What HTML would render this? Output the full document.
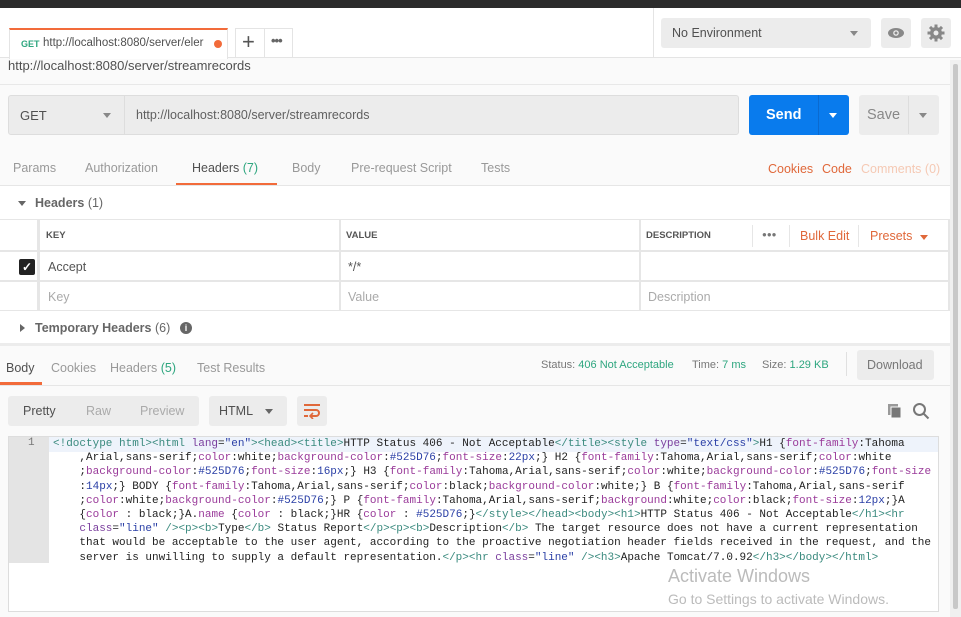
<!DOCTYPE html>
<html><head><style>
*{box-sizing:border-box;margin:0;padding:0}
body{width:961px;height:617px;overflow:hidden;background:#fafafa;font-family:"Liberation Sans",sans-serif;font-size:13px;color:#505050;position:relative}
.a{position:absolute}
.code div{height:14.2px;white-space:pre}
.t{color:#3a8a7e}.at{color:#7a3e9d}.s{color:#2a3fa6}.p{color:#9a3b9a}.v{color:#2a3fa6}
</style></head><body>
<div class="a" style="left:0;top:0;width:961px;height:8px;background:#2b2b2b"></div>
<div class="a" style="left:0;top:8px;width:961px;height:50px;background:#fff;border-bottom:1px solid #e4e4e4"></div>
<div class="a" style="left:653px;top:8px;width:1px;height:50px;background:#e4e4e4"></div>
<div class="a" style="left:9px;top:28px;width:219px;height:31px;background:#fff;border:1px solid #e4e4e4;border-top:2px solid #f26b3a;border-bottom:none"></div>
<div class="a" style="left:21px;top:39px;font-size:9px;font-weight:bold;color:#2ea67f">GET</div>
<div class="a" style="left:43px;top:37px;font-size:11.5px;color:#505050;width:166px;overflow:hidden;white-space:nowrap">http://localhost:8080/server/eler</div>
<div class="a" style="left:214px;top:40px;width:8px;height:8px;border-radius:50%;background:#f26b3a"></div>
<div class="a" style="left:235px;top:28px;width:58px;height:30px;background:#fff;border:1px solid #e4e4e4"></div>
<div class="a" style="left:264px;top:28px;width:1px;height:30px;background:#e4e4e4"></div>
<div class="a" style="left:242px;top:29px;font-size:22px;color:#555">+</div>
<div class="a" style="left:271px;top:33px;font-size:13px;color:#666;letter-spacing:-1px;font-weight:bold">•••</div>
<div class="a" style="left:661px;top:18px;width:210px;height:30px;background:#ececec;border-radius:3px"></div>
<div class="a" style="left:672px;top:26px;font-size:12.5px;color:#505050">No Environment</div>
<div class="a" style="left:850px;top:31px;width:0;height:0;border-left:4px solid transparent;border-right:4px solid transparent;border-top:5px solid #888"></div>
<div class="a" style="left:881px;top:18px;width:30px;height:30px;background:#ececec;border-radius:3px"></div>
<svg class="a" style="left:887px;top:27px" width="18" height="12"><ellipse cx="9" cy="6" rx="8" ry="5" fill="#888"/><circle cx="9" cy="6" r="2.8" fill="#ececec"/><circle cx="9" cy="6" r="1.5" fill="#888"/></svg>
<div class="a" style="left:921px;top:18px;width:30px;height:30px;background:#ececec;border-radius:3px"></div>
<svg class="a" style="left:927px;top:24px" width="18" height="18" viewBox="0 0 18 18"><g fill="#888"><circle cx="9" cy="9" r="6"/><rect x="7.5" y="0.5" width="3" height="17"/><rect x="0.5" y="7.5" width="17" height="3"/><rect x="7.5" y="0.5" width="3" height="17" transform="rotate(45 9 9)"/><rect x="7.5" y="0.5" width="3" height="17" transform="rotate(-45 9 9)"/></g><circle cx="9" cy="9" r="2.5" fill="#ececec"/></svg>
<div class="a" style="left:8px;top:58px;font-size:13px;color:#505050">http://localhost:8080/server/streamrecords</div>
<div class="a" style="left:0;top:84px;width:950px;height:1px;background:#e8e8e8"></div>
<div class="a" style="left:8px;top:95px;width:731px;height:40px;background:#ececec;border:1px solid #ddd;border-radius:3px"></div>
<div class="a" style="left:124px;top:96px;width:1px;height:38px;background:#ddd"></div>
<div class="a" style="left:20px;top:108px;font-size:13px;color:#505050">GET</div>
<div class="a" style="left:103px;top:113px;border-left:4px solid transparent;border-right:4px solid transparent;border-top:5px solid #888"></div>
<div class="a" style="left:136px;top:108px;font-size:12.5px;color:#606060">http://localhost:8080/server/streamrecords</div>
<div class="a" style="left:749px;top:95px;width:100px;height:40px;background:#097bed;border-radius:3px"></div>
<div class="a" style="left:818px;top:95px;width:1px;height:40px;background:#0a6ad0"></div>
<div class="a" style="left:766px;top:107px;font-size:14.5px;font-weight:bold;color:#fff">Send</div>
<div class="a" style="left:829px;top:113px;border-left:4px solid transparent;border-right:4px solid transparent;border-top:5px solid #fff"></div>
<div class="a" style="left:859px;top:95px;width:80px;height:40px;background:#ececec;border-radius:3px"></div>
<div class="a" style="left:908px;top:96px;width:1px;height:38px;background:#ddd"></div>
<div class="a" style="left:867px;top:107px;font-size:14.5px;color:#888">Save</div>
<div class="a" style="left:919px;top:113px;border-left:4px solid transparent;border-right:4px solid transparent;border-top:5px solid #888"></div>
<div class="a" style="left:13px;top:161px;font-size:12.5px;color:#999">Params</div>
<div class="a" style="left:85px;top:161px;font-size:12.5px;color:#999">Authorization</div>
<div class="a" style="left:192px;top:161px;font-size:12.5px;color:#505050">Headers <span style="color:#2ea67f">(7)</span></div>
<div class="a" style="left:176px;top:183px;width:101px;height:3px;background:#f26b3a"></div>
<div class="a" style="left:292px;top:161px;font-size:12.5px;color:#999">Body</div>
<div class="a" style="left:351px;top:161px;font-size:12.5px;color:#999">Pre-request Script</div>
<div class="a" style="left:481px;top:161px;font-size:12.5px;color:#999">Tests</div>
<div class="a" style="left:768px;top:162px;font-size:12.5px;color:#e0683a">Cookies</div>
<div class="a" style="left:822px;top:162px;font-size:12.5px;color:#e0683a">Code</div>
<div class="a" style="left:861px;top:162px;font-size:12.5px;color:#f5c9b4">Comments (0)</div>
<div class="a" style="left:0;top:185px;width:950px;height:1px;background:#e6e6e6"></div>
<div class="a" style="left:0;top:186px;width:950px;height:158px;background:#fff"></div>
<div class="a" style="left:18px;top:201px;border-left:4px solid transparent;border-right:4px solid transparent;border-top:5px solid #666"></div>
<div class="a" style="left:35px;top:196px;font-size:12.5px;font-weight:bold;color:#666">Headers <span style="font-weight:normal">(1)</span></div>
<div class="a" style="left:0;top:219px;width:950px;height:1px;background:#e6e6e6"></div>
<div class="a" style="left:37px;top:219px;width:3px;height:92px;background:#e6e6e6"></div>
<div class="a" style="left:339px;top:219px;width:2px;height:92px;background:#e6e6e6"></div>
<div class="a" style="left:639px;top:219px;width:2px;height:92px;background:#e6e6e6"></div>
<div class="a" style="left:948px;top:219px;width:2px;height:92px;background:#e6e6e6"></div>
<div class="a" style="left:0;top:250px;width:950px;height:2px;background:#e6e6e6"></div>
<div class="a" style="left:0;top:280px;width:950px;height:2px;background:#e6e6e6"></div>
<div class="a" style="left:0;top:310px;width:950px;height:1px;background:#e6e6e6"></div>
<div class="a" style="left:46px;top:230px;font-size:9.5px;font-weight:bold;color:#555">KEY</div>
<div class="a" style="left:346px;top:230px;font-size:9.5px;font-weight:bold;color:#555">VALUE</div>
<div class="a" style="left:646px;top:230px;font-size:9.5px;font-weight:bold;color:#555">DESCRIPTION</div>
<div class="a" style="left:752px;top:225px;width:1px;height:22px;background:#e6e6e6"></div>
<div class="a" style="left:789px;top:225px;width:1px;height:22px;background:#e6e6e6"></div>
<div class="a" style="left:858px;top:225px;width:1px;height:22px;background:#e6e6e6"></div>
<div class="a" style="left:762px;top:230px;font-size:8px;color:#777;letter-spacing:0px">●●●</div>
<div class="a" style="left:800px;top:229px;font-size:12.5px;color:#e0683a">Bulk Edit</div>
<div class="a" style="left:870px;top:229px;font-size:12.5px;color:#e0683a">Presets</div>
<div class="a" style="left:920px;top:235px;border-left:4px solid transparent;border-right:4px solid transparent;border-top:5px solid #e0683a"></div>
<div class="a" style="left:19px;top:259px;width:16px;height:16px;background:#222;border-radius:2px;color:#fff;font-size:12px;font-weight:bold;text-align:center;line-height:16px">✓</div>
<div class="a" style="left:48px;top:260px;font-size:12.5px;color:#555">Accept</div>
<div class="a" style="left:348px;top:260px;font-size:12.5px;color:#555">*/*</div>
<div class="a" style="left:48px;top:290px;font-size:12.5px;color:#aaa">Key</div>
<div class="a" style="left:348px;top:290px;font-size:12.5px;color:#aaa">Value</div>
<div class="a" style="left:648px;top:290px;font-size:12.5px;color:#aaa">Description</div>
<div class="a" style="left:20px;top:324px;border-top:4px solid transparent;border-bottom:4px solid transparent;border-left:5px solid #666"></div>
<div class="a" style="left:35px;top:321px;font-size:12.5px;font-weight:bold;color:#666">Temporary Headers <span style="font-weight:normal">(6)</span></div>
<div class="a" style="left:180px;top:322px;width:12px;height:12px;border-radius:50%;background:#666;color:#fff;font-size:9px;font-weight:bold;text-align:center;line-height:12px">i</div>
<div class="a" style="left:0;top:343px;width:950px;height:3px;background:#ececec"></div>
<div class="a" style="left:6px;top:361px;font-size:12.5px;color:#505050">Body</div>
<div class="a" style="left:0;top:382px;width:42px;height:3px;background:#f26b3a"></div>
<div class="a" style="left:51px;top:361px;font-size:12.5px;color:#999">Cookies</div>
<div class="a" style="left:110px;top:361px;font-size:12.5px;color:#999">Headers <span style="color:#2ea67f">(5)</span></div>
<div class="a" style="left:197px;top:361px;font-size:12.5px;color:#999">Test Results</div>
<div class="a" style="left:541px;top:359px;font-size:11px;color:#777">Status: <span style="color:#2ea67f">406 Not Acceptable</span></div>
<div class="a" style="left:692px;top:359px;font-size:11px;color:#777">Time: <span style="color:#2ea67f">7 ms</span></div>
<div class="a" style="left:762px;top:359px;font-size:11px;color:#777">Size: <span style="color:#2ea67f">1.29 KB</span></div>
<div class="a" style="left:846px;top:352px;width:1px;height:24px;background:#e0e0e0"></div>
<div class="a" style="left:857px;top:350px;width:77px;height:30px;background:#ececec;border-radius:3px"></div>
<div class="a" style="left:867px;top:358px;font-size:12.5px;color:#777">Download</div>
<div class="a" style="left:0;top:385px;width:950px;height:1px;background:#e6e6e6"></div>
<div class="a" style="left:8px;top:396px;width:191px;height:30px;background:#ececec;border-radius:3px"></div>
<div class="a" style="left:23px;top:404px;font-size:12.5px;color:#505050">Pretty</div>
<div class="a" style="left:86px;top:404px;font-size:12.5px;color:#aaa">Raw</div>
<div class="a" style="left:140px;top:404px;font-size:12.5px;color:#aaa">Preview</div>
<div class="a" style="left:209px;top:396px;width:78px;height:30px;background:#ececec;border-radius:3px"></div>
<div class="a" style="left:219px;top:404px;font-size:12.5px;color:#505050">HTML</div>
<div class="a" style="left:265px;top:409px;border-left:4px solid transparent;border-right:4px solid transparent;border-top:5px solid #666"></div>
<div class="a" style="left:297px;top:396px;width:30px;height:30px;background:#ececec;border-radius:3px"></div>
<svg class="a" style="left:303px;top:403px" width="18" height="16"><path d="M1 2h16M1 7h12a3 3 0 0 1 0 6H8M1 13h4" stroke="#e0683a" stroke-width="2" fill="none"/><path d="M10 10l-3 3 3 3" stroke="#e0683a" stroke-width="1.6" fill="none"/></svg>
<svg class="a" style="left:887px;top:403px" width="16" height="16"><rect x="1" y="1" width="10" height="11" fill="#999"/><rect x="4" y="4" width="10" height="11" fill="#777" stroke="#fafafa"/></svg>
<svg class="a" style="left:912px;top:402px" width="18" height="18"><circle cx="7.5" cy="7.5" r="5.5" stroke="#777" stroke-width="2" fill="none"/><path d="M11.5 11.5l5 5" stroke="#777" stroke-width="2"/></svg>
<div class="a" style="left:8px;top:436px;width:931px;height:176px;background:#fff;border:1px solid #ddd"></div>
<div class="a" style="left:9px;top:437px;width:40px;height:126px;background:#e4e4e4"></div>
<div class="a" style="left:49px;top:437px;width:889px;height:15px;background:#eef3fb"></div>
<div class="a" style="left:28px;top:437px;font-family:'Liberation Mono',monospace;font-size:11px;color:#777">1</div>
<div class="a code" style="left:53px;top:437px;font-family:'Liberation Mono',monospace;font-size:11px;color:#222;line-height:14.2px">
<div><span class="t">&lt;!doctype html&gt;&lt;html </span><span class="at">lang</span>=<span class="s">"en"</span><span class="t">&gt;&lt;head&gt;&lt;title&gt;</span>HTTP Status 406 - Not Acceptable<span class="t">&lt;/title&gt;&lt;style </span><span class="at">type</span>=<span class="s">"text/css"</span><span class="t">&gt;</span>H1 {<span class="p">font-family</span>:Tahoma</div>
<div>    ,Arial,sans-serif;<span class="p">color</span>:white;<span class="p">background-color</span>:<span class="v">#525D76</span>;<span class="p">font-size</span>:<span class="v">22px</span>;} H2 {<span class="p">font-family</span>:Tahoma,Arial,sans-serif;<span class="p">color</span>:white</div>
<div>    ;<span class="p">background-color</span>:<span class="v">#525D76</span>;<span class="p">font-size</span>:<span class="v">16px</span>;} H3 {<span class="p">font-family</span>:Tahoma,Arial,sans-serif;<span class="p">color</span>:white;<span class="p">background-color</span>:<span class="v">#525D76</span>;<span class="p">font-size</span></div>
<div>    :<span class="v">14px</span>;} BODY {<span class="p">font-family</span>:Tahoma,Arial,sans-serif;<span class="p">color</span>:black;<span class="p">background-color</span>:white;} B {<span class="p">font-family</span>:Tahoma,Arial,sans-serif</div>
<div>    ;<span class="p">color</span>:white;<span class="p">background-color</span>:<span class="v">#525D76</span>;} P {<span class="p">font-family</span>:Tahoma,Arial,sans-serif;<span class="p">background</span>:white;<span class="p">color</span>:black;<span class="p">font-size</span>:<span class="v">12px</span>;}A</div>
<div>    {<span class="p">color</span> : black;}A.<span class="p">name</span> {<span class="p">color</span> : black;}HR {<span class="p">color</span> : <span class="v">#525D76</span>;}<span class="t">&lt;/style&gt;&lt;/head&gt;&lt;body&gt;&lt;h1&gt;</span>HTTP Status 406 - Not Acceptable<span class="t">&lt;/h1&gt;&lt;hr</span></div>
<div>    <span class="at">class</span>=<span class="s">"line"</span> <span class="t">/&gt;&lt;p&gt;&lt;b&gt;</span>Type<span class="t">&lt;/b&gt;</span> Status Report<span class="t">&lt;/p&gt;&lt;p&gt;&lt;b&gt;</span>Description<span class="t">&lt;/b&gt;</span> The target resource does not have a current representation</div>
<div>    that would be acceptable to the user agent, according to the proactive negotiation header fields received in the request, and the</div>
<div>    server is unwilling to supply a default representation.<span class="t">&lt;/p&gt;&lt;hr </span><span class="at">class</span>=<span class="s">"line"</span> <span class="t">/&gt;&lt;h3&gt;</span>Apache Tomcat/7.0.92<span class="t">&lt;/h3&gt;&lt;/body&gt;&lt;/html&gt;</span></div>
</div>
<div class="a" style="left:668px;top:566px;font-size:18px;color:#bbb">Activate Windows</div>
<div class="a" style="left:668px;top:591px;font-size:14px;color:#bbb">Go to Settings to activate Windows.</div>
<div class="a" style="left:950px;top:60px;width:11px;height:557px;background:#f0f0f0"></div>
<div class="a" style="left:953px;top:64px;width:5px;height:545px;background:#c8c8c8;border-radius:2px"></div>
</body></html>
